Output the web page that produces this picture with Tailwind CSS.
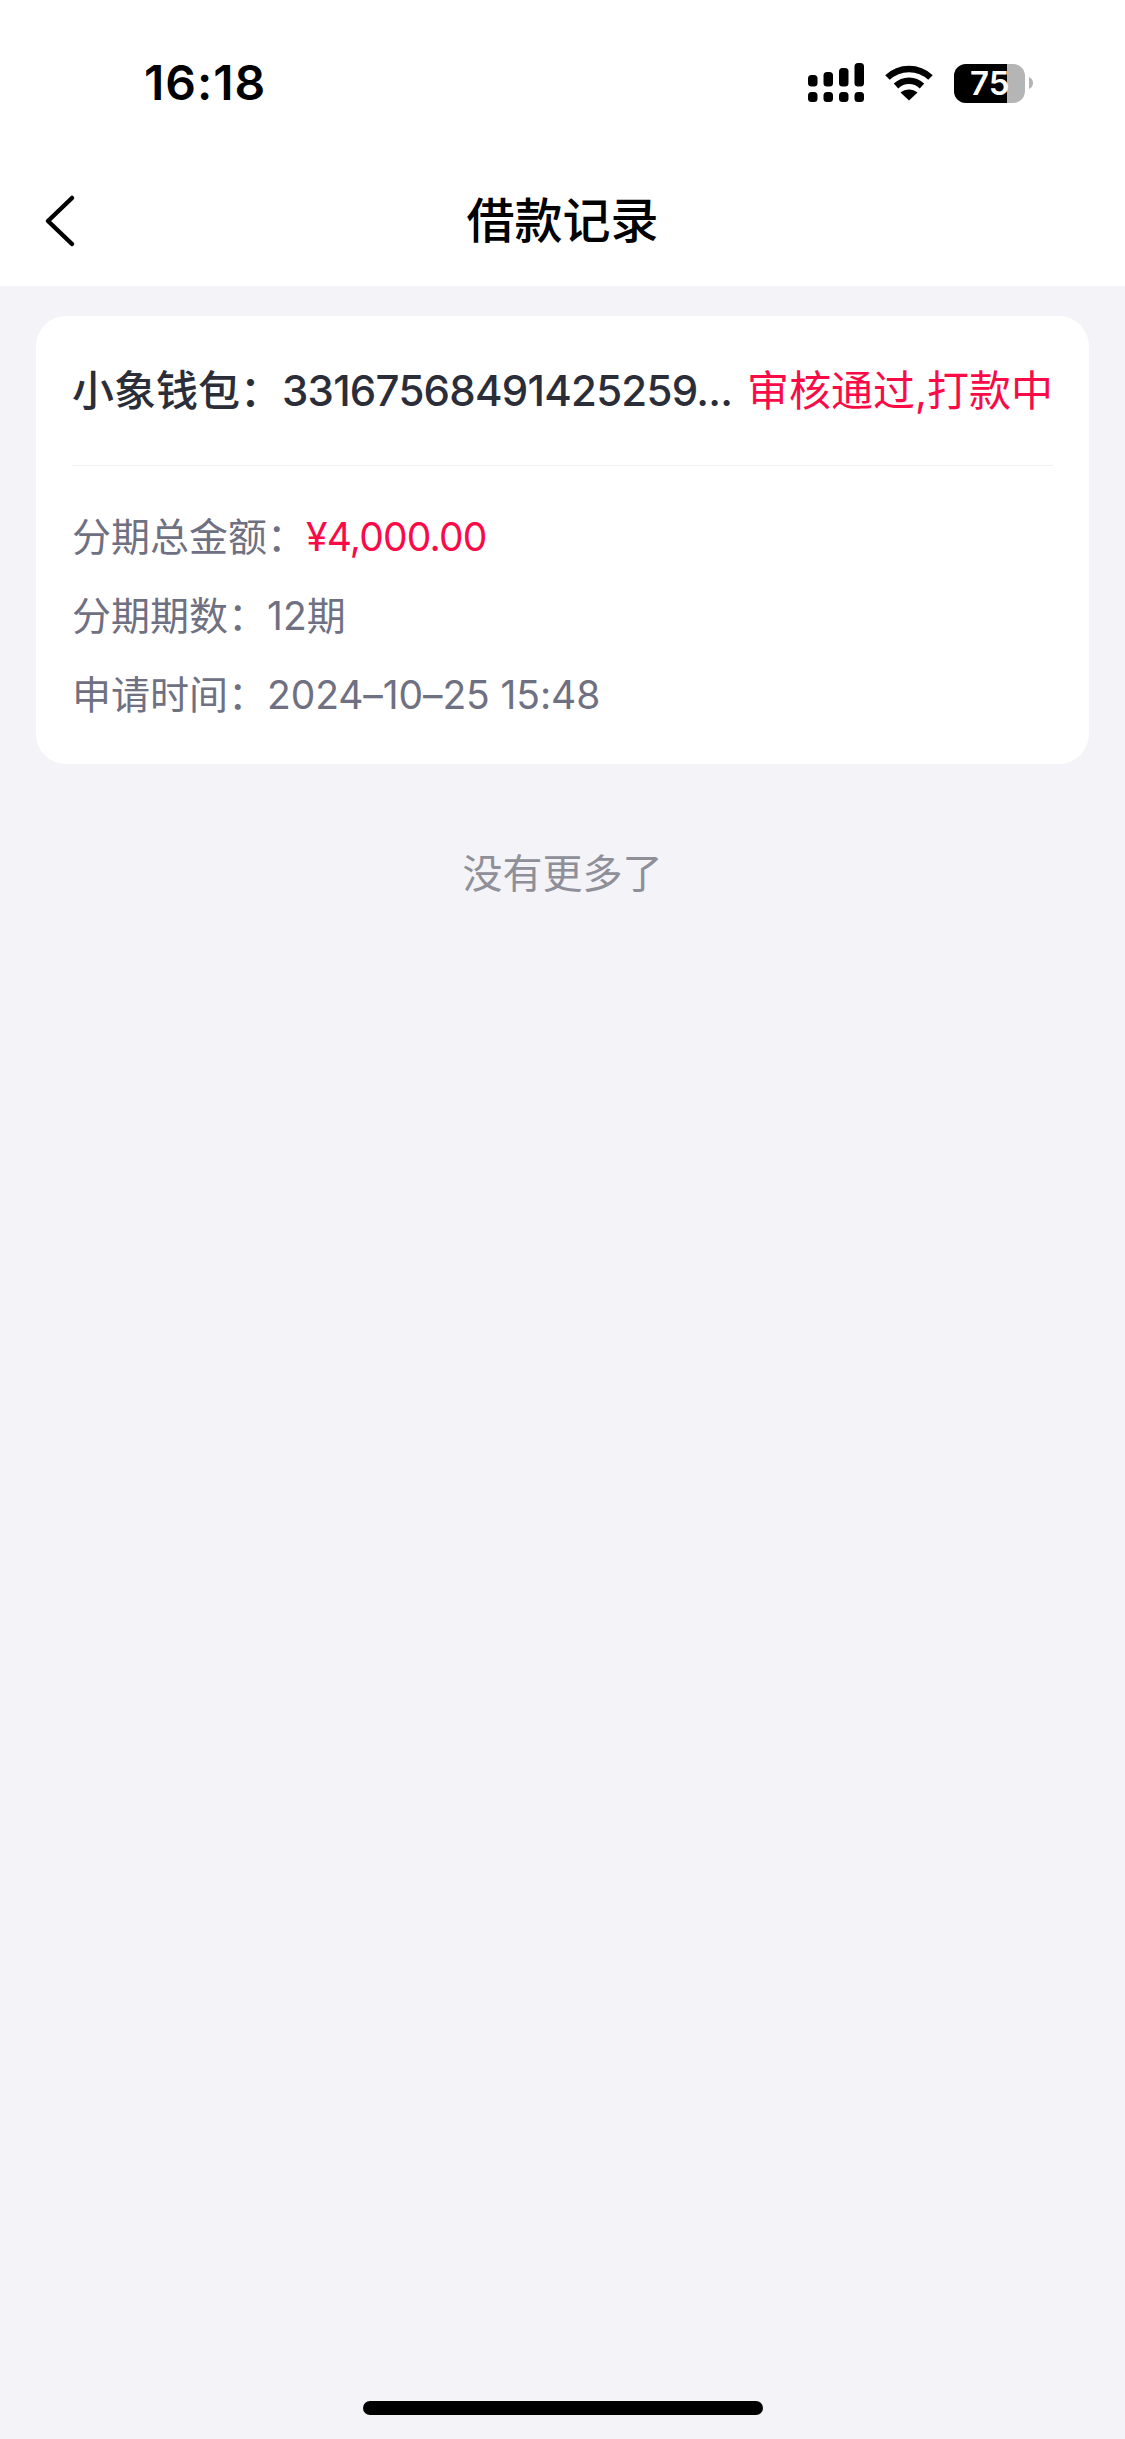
<!DOCTYPE html>
<html lang="zh-CN">
<head>
  <meta charset="UTF-8" />
  <title>借款记录</title>
  <script src="https://cdn.jsdelivr.net/npm/@tailwindcss/browser@4"></script>
</head>
<body class="bg-[#f3f3f8] font-['Inter','Noto_Sans_CJK_SC',sans-serif]">
  <div class="flex flex-col h-[2439px] w-[1125px] overflow-hidden">

    <!-- Header -->
    <header class="bg-white h-[286px] shrink-0 flex flex-col">
      <!-- Status bar -->
      <div class="h-[166px] flex items-start justify-between pt-[58px] pl-[144px] pr-[92px]">
        <span class="text-[48px] leading-[50px] font-semibold tracking-[1px] text-black">16:18</span>
        <div class="flex items-center gap-[21px] pt-[5px]">
          <svg width="56" height="40" viewBox="0 0 56 40" fill="#000">
            <rect x="0" y="12" width="9.5" height="11.5" rx="3.5" />
            <rect x="15.5" y="9" width="9.5" height="14.5" rx="3.5" />
            <rect x="31" y="5" width="9.5" height="18.5" rx="3.5" />
            <rect x="46.5" y="0" width="9.5" height="23.5" rx="3.5" />
            <rect x="0" y="29" width="9.5" height="10" rx="3.5" />
            <rect x="15.5" y="29" width="9.5" height="10" rx="3.5" />
            <rect x="31" y="29" width="9.5" height="10" rx="3.5" />
            <rect x="46.5" y="29" width="9.5" height="10" rx="3.5" />
          </svg>
          <svg width="48" height="36" viewBox="0 0 48 36" fill="none" stroke="#000" stroke-width="6.5">
            <path d="M2.5 12.5C14.5 1 33.5 1 45.5 12.5" />
            <path d="M11 21C18.5 14 29.5 14 37 21" />
            <path d="M24 35.5L15.5 27.5C20.5 23.5 27.5 23.5 32.5 27.5Z" fill="#000" stroke="none" />
          </svg>
          <div class="flex items-center gap-[4px]">
            <div class="relative w-[71px] h-[39px] rounded-[12px] bg-[#b5b5b5] overflow-hidden">
              <div class="w-[53px] h-full bg-black"></div>
              <span class="absolute left-[16px] top-0 text-[33px] leading-[39px] font-semibold text-white">75</span>
            </div>
            <svg width="4" height="12" viewBox="0 0 4 12" fill="#b5b5b5"><path d="M0 0C2.5 1 4 3 4 6S2.5 11 0 12Z" /></svg>
          </div>
        </div>
      </div>
      <!-- Nav bar -->
      <div class="relative flex items-center justify-center h-[110px]">
        <svg class="absolute left-[44px] top-[28px]" width="32" height="54" viewBox="0 0 32 54" fill="none" stroke="#000" stroke-width="4.5" stroke-linecap="round" stroke-linejoin="round">
          <path d="M28 4L4 27L28 50" />
        </svg>
        <h1 class="text-[48px] leading-[60px] font-medium text-black">借款记录</h1>
      </div>
    </header>

    <!-- Record card -->
    <main class="px-[36px] pt-[30px]">
      <section class="bg-white rounded-[30px] px-[36px]">
        <div class="flex items-center justify-between h-[150px] border-b border-[#f2f2f5]">
          <span class="text-[42px] font-medium text-[#2b2e38]">小象钱包：<span class="tracking-[-0.75px]">33167568491425259...</span></span>
          <span class="text-[42px] text-[#fa0a46]">审核通过,打款中</span>
        </div>
        <div class="flex flex-col gap-[24px] pt-[43px] pb-[42px] text-[39px] leading-[55px] text-[#6f7082]">
          <div class="flex"><span>分期总金额：</span><span class="text-[#fa0a46] tracking-[-0.8px]">¥4,000.00</span></div>
          <div class="flex"><span>分期期数：</span><span>12期</span></div>
          <div class="flex"><span>申请时间：</span><span class="tracking-[-0.1px]">2024–10–25 15:48</span></div>
        </div>
      </section>
      <p class="text-center text-[40px] leading-[56px] text-[#8f8f99] mt-[82px]">没有更多了</p>
    </main>

    <!-- Home indicator -->
    <div class="mt-auto flex justify-center pb-[24px]">
      <div class="w-[400px] h-[14px] rounded-full bg-black"></div>
    </div>
  </div>
</body>
</html>
